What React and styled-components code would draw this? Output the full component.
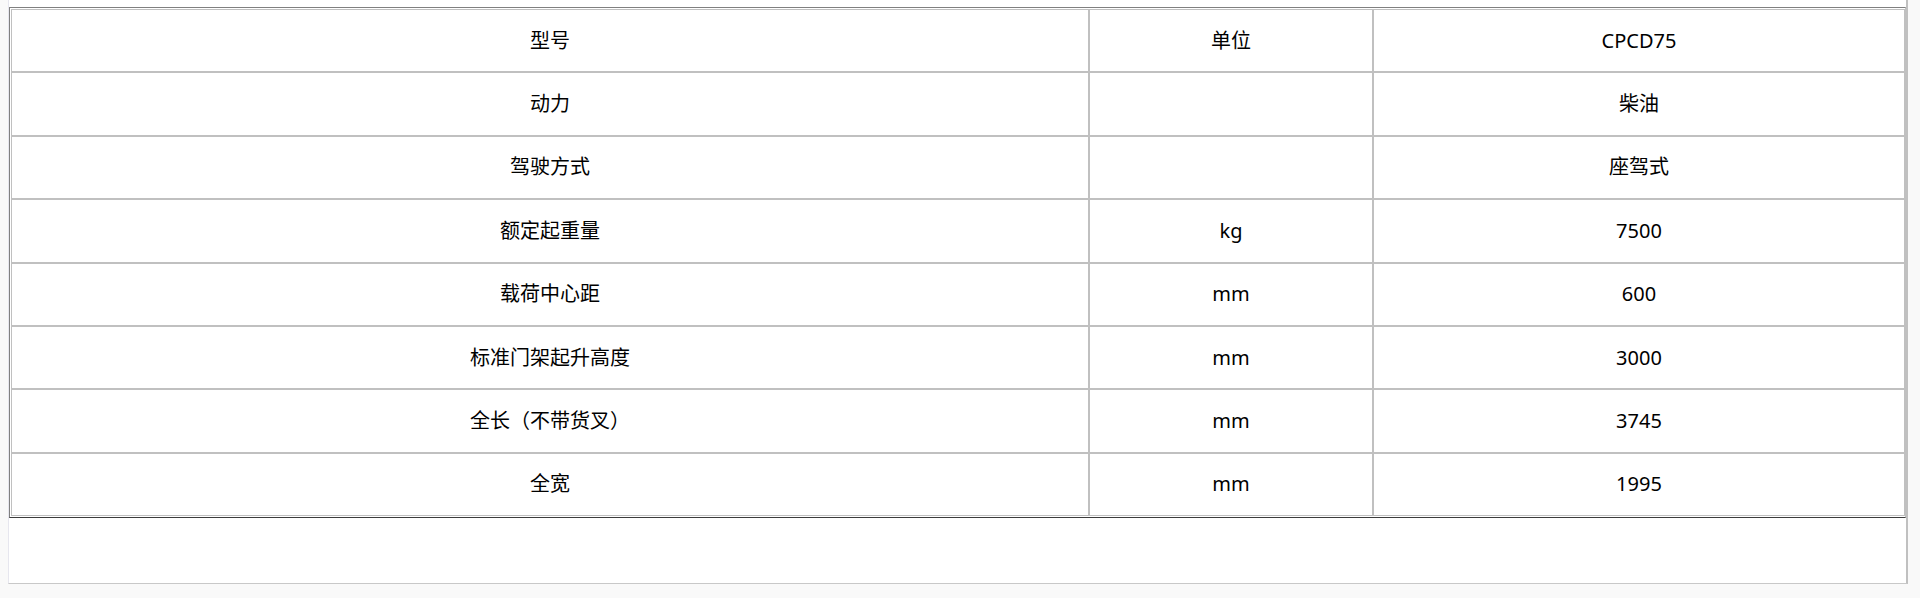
import React from "react";
import styled, { createGlobalStyle } from "styled-components";

const GlobalStyle = createGlobalStyle`
  html, body {
    margin: 0;
    padding: 0;
    background: #f9f9f9;
  }
  body {
    font-family: "Noto Sans", "Noto Sans CJK SC", sans-serif;
    color: #000;
  }
`;

const Page = styled.div`
  padding-left: 8px;
  height: 598px;
  overflow: hidden;
`;

const Panel = styled.div`
  width: 1897px;
  padding-top: 7px;
  padding-bottom: 65px;
  background: #fff;
  border-left: 1px solid #e6e6ee;
  border-right: 2px solid #c0c0c0;
  border-bottom: 1px solid #c8c8c8;
`;

const SpecTable = styled.table`
  box-sizing: border-box;
  width: 1897px;
  table-layout: fixed;
  border-collapse: separate;
  border-spacing: 0;
  padding: 1px 0 1px 1px;
  border-top: 1px solid #808080;
  border-left: 1px solid #808080;
  border-bottom: 1px solid #3c3c3c;
  border-right: 1px solid #c0c0c0;
`;

const Cell = styled.td`
  box-sizing: border-box;
  width: ${(p) => (p.$w ? `${p.$w}px` : "auto")};
  height: 63.375px;
  padding: 0;
  border: 1px solid #c0c0c0;
  text-align: center;
  vertical-align: middle;
  font-size: 20px;
  line-height: 26px;
`;

const specs = [
  ["型号", "单位", "CPCD75"],
  ["动力", "", "柴油"],
  ["驾驶方式", "", "座驾式"],
  ["额定起重量", "kg", "7500"],
  ["载荷中心距", "mm", "600"],
  ["标准门架起升高度", "mm", "3000"],
  ["全长（不带货叉）", "mm", "3745"],
  ["全宽", "mm", "1995"],
];

const App = () => {
  return (
    <>
      <GlobalStyle />
      <Page>
        <Panel>
          <SpecTable>
            <tbody>
              {specs.map((row, i) => (
                <tr key={i}>
                  <Cell $w={i === 0 ? 1078 : 0}>{row[0]}</Cell>
                  <Cell $w={i === 0 ? 284 : 0}>{row[1]}</Cell>
                  <Cell>{row[2]}</Cell>
                </tr>
              ))}
            </tbody>
          </SpecTable>
        </Panel>
      </Page>
    </>
  );
};

export default App;
